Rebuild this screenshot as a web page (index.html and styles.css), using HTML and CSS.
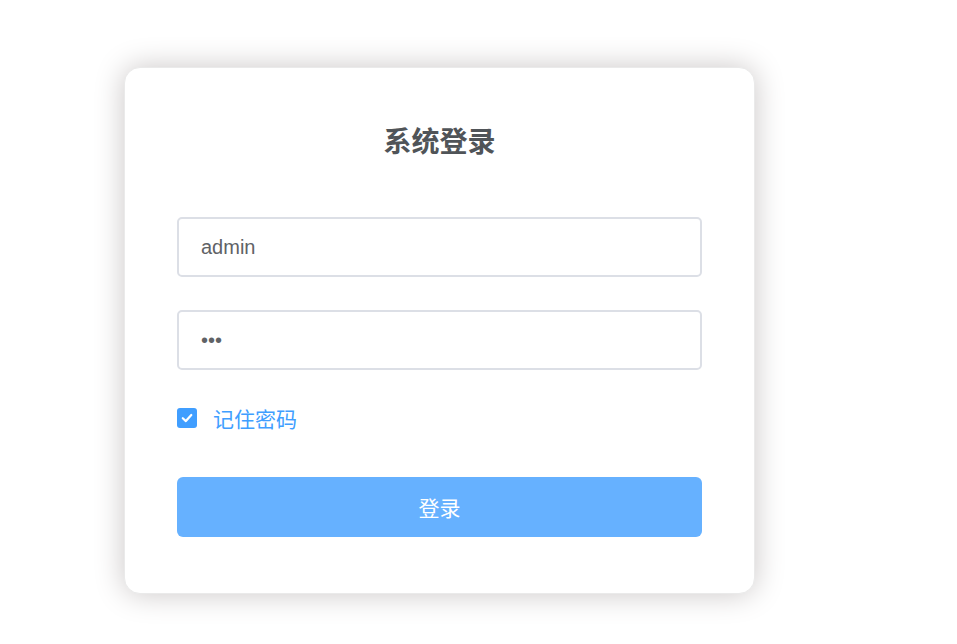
FILE: index.html
```html
<!DOCTYPE html>
<html lang="zh">
<head>
<meta charset="utf-8">
<title>系统登录</title>
<link rel="stylesheet" href="styles.css">
</head>
<body>
<div class="page">
  <form class="card">
    <h3 class="title">系统登录</h3>
    <div class="field"><input class="input" type="text" value="admin"></div>
    <div class="field"><input class="input" type="password" value="123"></div>
    <label class="remember">
      <span class="check"><svg width="14" height="14" viewBox="0 0 14 14"><path d="M2.8 7.2 L5.9 10.1 L11.3 4" fill="none" stroke="#fff" stroke-width="2.2" stroke-linecap="round" stroke-linejoin="round"/></svg></span>
      <span class="remember-text">记住密码</span>
    </label>
    <button class="btn" type="button">登录</button>
  </form>
</div>
</body>
</html>
```
FILE: styles.css
```css
html, body {
  margin: 0;
  padding: 0;
  background: #fff;
  font-family: "Liberation Sans", Arial, "Noto Sans CJK SC", sans-serif;
}
.page {
  min-height: 644px;
  box-sizing: border-box;
  padding: 67px 0 0 124px;
}
.card {
  box-sizing: border-box;
  width: 631px;
  height: 527px;
  padding: 0 52px;
  border: 1px solid #eaeaea;
  border-radius: 16px;
  background: #fff;
  box-shadow: 0 0 30px #cac6c6;
  display: flex;
  flex-direction: column;
}
.title {
  margin: 54px 0 0;
  height: 36px;
  line-height: 36px;
  text-align: center;
  font-size: 28px;
  font-weight: bold;
  color: #505458;
  font-family: "Noto Sans CJK SC", sans-serif;
}
.field {
  margin-top: 59px;
}
.field + .field {
  margin-top: 33px;
}
.input {
  box-sizing: border-box;
  display: block;
  width: 525px;
  height: 60px;
  padding: 0 22px;
  border: 2px solid #dcdfe6;
  border-radius: 5px;
  font-family: "Liberation Sans", Arial, sans-serif;
  font-size: 20px;
  color: #606266;
  outline: none;
}
.remember {
  margin-top: 37px;
  display: flex;
  align-items: center;
  height: 22px;
  gap: 16px;
}
.check {
  width: 20px;
  height: 20px;
  border-radius: 3px;
  background: #409eff;
  display: flex;
  align-items: center;
  justify-content: center;
}
.remember-text {
  font-size: 21px;
  color: #409eff;
  font-family: "Noto Sans CJK SC", sans-serif;
  line-height: 22px;
}
.btn {
  margin-top: 48px;
  width: 525px;
  height: 60px;
  border: none;
  border-radius: 6px;
  background: #66b1ff;
  color: #fff;
  font-size: 21px;
  font-family: "Noto Sans CJK SC", sans-serif;
}
```
